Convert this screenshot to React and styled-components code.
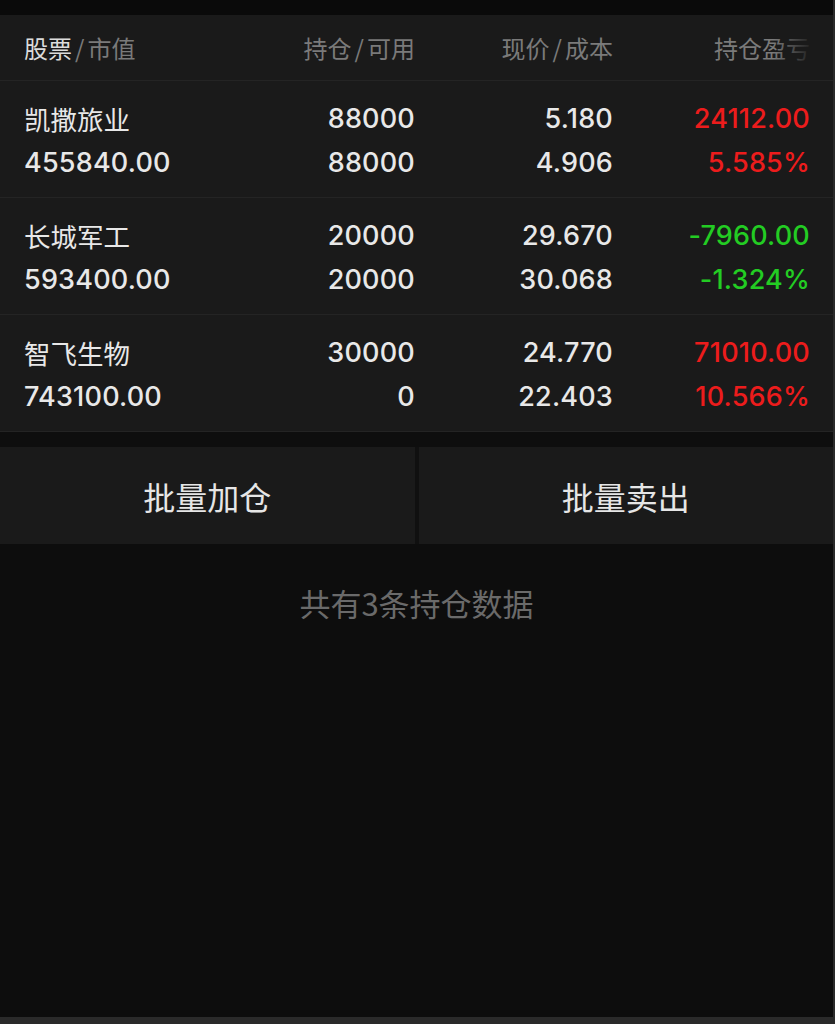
import React from "react";
import styled, { createGlobalStyle } from "styled-components";

const Global = createGlobalStyle`
  html, body { margin: 0; padding: 0; background: #0d0d0d; }
  body { font-family: "Inter", "Noto Sans CJK SC", sans-serif; }
  * { box-sizing: border-box; }
`;

const Page = styled.div`
  width: 835px;
  min-height: 1024px;
  display: flex;
  flex-direction: column;
  background: #0d0d0d;
  border-right: 2px solid #2a2a2a;
`;

const TopBar = styled.div`
  height: 15px;
  background: #0a0a0a;
`;

const Table = styled.div`
  background: #1a1a1a;
`;

const Grid = styled.div`
  display: grid;
  grid-template-columns: 200px 191px 198px 197px;
  padding: 0 23px 0 24px;
  border-bottom: 1px solid #242424;
`;

const HeaderRow = styled(Grid)`
  position: relative;
  height: 66px;
  align-items: center;
  font-family: "Noto Sans CJK SC", sans-serif;
  font-size: 24px;
  color: #7a7a7a;
  &::after {
    content: "";
    position: absolute;
    right: 0;
    top: 0;
    bottom: 0;
    width: 60px;
    background: linear-gradient(to right, rgba(26,26,26,0), rgba(26,26,26,0.95) 65%, #1a1a1a);
  }
`;

const HeadCell = styled.div`
  text-align: ${(p) => (p.$left ? "left" : "right")};
  white-space: nowrap;
`;

const Strong = styled.span`
  color: #dcdcdc;
`;

const Slash = styled.span`
  margin: 0 3px;
`;

const Row = styled(Grid)`
  height: 117px;
  padding-top: 16px;
`;

const Cell = styled.div`
  display: flex;
  flex-direction: column;
  align-items: ${(p) => (p.$left ? "flex-start" : "flex-end")};
`;

const Line = styled.div`
  height: 44px;
  line-height: 44px;
  font-size: 27px;
  font-weight: 500;
  letter-spacing: 0.2px;
  white-space: nowrap;
  color: ${(p) =>
    p.$tone === "up" ? "#ec1c1c" : p.$tone === "down" ? "#23cc23" : "#e8e8e8"};
`;

const Name = styled(Line)`
  font-family: "Noto Sans CJK SC", sans-serif;
  font-weight: 400;
  font-size: 26.5px;
  letter-spacing: 0;
`;

const Gap = styled.div`
  height: 15px;
  background: #0e0e0e;
`;

const ButtonRow = styled.div`
  display: flex;
  gap: 4px;
  background: #101010;
`;

const ActionButton = styled.button`
  flex: 1;
  height: 97px;
  border: none;
  background: #1a1a1a;
  color: #e6e6e6;
  font-family: "Noto Sans CJK SC", sans-serif;
  font-size: 32px;
  padding: 0;
  cursor: pointer;
`;

const Footer = styled.div`
  flex: 1;
  padding-top: 42px;
  text-align: center;
  font-family: "Noto Sans CJK SC", sans-serif;
  font-size: 31px;
  line-height: 34px;
  color: #6a6a6a;
`;

const BottomBar = styled.div`
  height: 7px;
  background: #2a2a2a;
`;

const rows = [
  {
    name: "凯撒旅业",
    value: "455840.00",
    hold: "88000",
    avail: "88000",
    price: "5.180",
    cost: "4.906",
    pl: "24112.00",
    pct: "5.585%",
    tone: "up",
  },
  {
    name: "长城军工",
    value: "593400.00",
    hold: "20000",
    avail: "20000",
    price: "29.670",
    cost: "30.068",
    pl: "-7960.00",
    pct: "-1.324%",
    tone: "down",
  },
  {
    name: "智飞生物",
    value: "743100.00",
    hold: "30000",
    avail: "0",
    price: "24.770",
    cost: "22.403",
    pl: "71010.00",
    pct: "10.566%",
    tone: "up",
  },
];

export default function App() {
  return (
    <>
      <Global />
      <Page>
        <TopBar />
        <Table>
          <HeaderRow>
            <HeadCell $left>
              <Strong>股票</Strong>
              <Slash>/</Slash>市值
            </HeadCell>
            <HeadCell>
              持仓<Slash>/</Slash>可用
            </HeadCell>
            <HeadCell>
              现价<Slash>/</Slash>成本
            </HeadCell>
            <HeadCell>持仓盈亏</HeadCell>
          </HeaderRow>
          {rows.map((r) => (
            <Row key={r.name}>
              <Cell $left>
                <Name>{r.name}</Name>
                <Line>{r.value}</Line>
              </Cell>
              <Cell>
                <Line>{r.hold}</Line>
                <Line>{r.avail}</Line>
              </Cell>
              <Cell>
                <Line>{r.price}</Line>
                <Line>{r.cost}</Line>
              </Cell>
              <Cell>
                <Line $tone={r.tone}>{r.pl}</Line>
                <Line $tone={r.tone}>{r.pct}</Line>
              </Cell>
            </Row>
          ))}
        </Table>
        <Gap />
        <ButtonRow>
          <ActionButton>批量加仓</ActionButton>
          <ActionButton>批量卖出</ActionButton>
        </ButtonRow>
        <Footer>共有3条持仓数据</Footer>
        <BottomBar />
      </Page>
    </>
  );
}
